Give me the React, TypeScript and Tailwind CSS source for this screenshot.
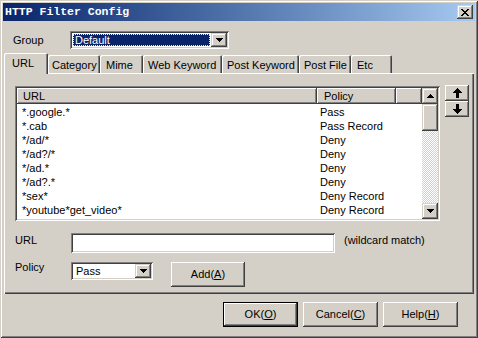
const sunken =
  "shadow-[inset_1px_1px_0_#808080,inset_-1px_-1px_0_#fff,inset_2px_2px_0_#404040,inset_-2px_-2px_0_#d4d0c8]";
const pushBtn =
  "shadow-[inset_-1px_-1px_0_#404040,inset_1px_1px_0_#fff,inset_-2px_-2px_0_#808080]";
const arrowBtn =
  "shadow-[inset_-1px_-1px_0_#404040,inset_1px_1px_0_#d4d0c8,inset_-2px_-2px_0_#808080,inset_2px_2px_0_#fff]";

const rows = [
  ["*.google.*", "Pass"],
  ["*.cab", "Pass Record"],
  ["*/ad/*", "Deny"],
  ["*/ad?/*", "Deny"],
  ["*/ad.*", "Deny"],
  ["*/ad?.*", "Deny"],
  ["*sex*", "Deny Record"],
  ["*youtube*get_video*", "Deny Record"],
];

const tabs = [
  { label: "Category", w: "w-[52px] pl-[4px]" },
  { label: "Mime", w: "w-[43px] pl-[6px]" },
  { label: "Web Keyword", w: "w-[79px] pl-[5px]" },
  { label: "Post Keyword", w: "w-[77px] pl-[5px]" },
  { label: "Post File", w: "w-[52px] pl-[5px]" },
  { label: "Etc", w: "w-[41px] pl-[6px]" },
];

function DownTri() {
  return (
    <svg width="7" height="4" viewBox="0 0 7 4" shapeRendering="crispEdges">
      <path d="M0 0h7v1H0zM1 1h5v1H1zM2 2h3v1H2zM3 3h1v1H3z" fill="#000" />
    </svg>
  );
}

function UpTri() {
  return (
    <svg width="7" height="4" viewBox="0 0 7 4" shapeRendering="crispEdges">
      <path d="M3 0h1v1H3zM2 1h3v1H2zM1 2h5v1H1zM0 3h7v1H0z" fill="#000" />
    </svg>
  );
}

function BigArrow({ down }: { down?: boolean }) {
  return (
    <svg
      width="9"
      height="10"
      viewBox="0 0 9 10"
      shapeRendering="crispEdges"
      className={down ? "rotate-180" : ""}
    >
      <path d="M4 0h1v1H4zM3 1h3v1H3zM2 2h5v1H2zM1 3h7v1H1zM0 4h9v1H0zM3 5h3v5H3z" fill="#000" />
    </svg>
  );
}

function CloseX() {
  return (
    <svg width="8" height="7" viewBox="0 0 8 7" shapeRendering="crispEdges">
      <path
        d="M0 0h2v1H0zM6 0h2v1H6zM1 1h2v1H1zM5 1h2v1H5zM2 2h4v1H2zM3 3h2v1H3zM2 4h4v1H2zM1 5h2v1H1zM5 5h2v1H5zM0 6h2v1H0zM6 6h2v1H6z"
        fill="#000"
      />
    </svg>
  );
}

function Combo({ width, text, selected }: { width: string; text: string; selected?: boolean }) {
  return (
    <div className={`${width} h-[18px] bg-white p-[2px] flex ${sunken}`}>
      <div className="flex-1 p-px">
        <div
          className={
            selected
              ? "h-full bg-[#0a246a] text-white border border-dotted border-[#f4f0c0] pl-px flex items-center"
              : "h-full pl-[2px] flex items-center"
          }
        >
          {text}
        </div>
      </div>
      <div className={`w-[16px] h-full bg-[#d4d0c8] flex items-center justify-center ${arrowBtn}`}>
        <DownTri />
      </div>
    </div>
  );
}

function Btn({ children, width, def }: { children: React.ReactNode; width: string; def?: boolean }) {
  return (
    <div
      className={`${width} h-[25px] bg-[#d4d0c8] flex items-center justify-center ${pushBtn} ${
        def ? "border border-black" : ""
      }`}
    >
      {children}
    </div>
  );
}

export default function App() {
  return (
    <div className="w-[478px] h-[338px] bg-[#d4d0c8] p-[3px] flex flex-col font-['Liberation_Sans',Arial,sans-serif] text-[11px] leading-[13px] text-black shadow-[inset_1px_1px_0_#d4d0c8,inset_-1px_-1px_0_#404040,inset_2px_2px_0_#fff,inset_-2px_-2px_0_#808080]">
      {/* title bar */}
      <div className="h-[18px] flex items-center bg-linear-to-r from-[#0a246a] to-[#a6caf0] pl-[2px] pr-[2px]">
        <span className="font-['Liberation_Mono',monospace] font-bold text-[11.5px] leading-none text-white">
          HTTP Filter Config
        </span>
        <div className={`ml-auto w-[16px] h-[14px] bg-[#d4d0c8] flex items-center justify-center ${arrowBtn}`}>
          <CloseX />
        </div>
      </div>

      {/* group */}
      <div className="mt-[10px] h-[18px] flex items-center">
        <span className="ml-[10px] w-[57px]">Group</span>
        <Combo width="w-[159px]" text="Default" selected />
      </div>

      {/* tabs */}
      <div className="mt-[4px] ml-[1px] h-[20px] flex items-end">
        <div className="relative z-10 -mb-px h-[21px] w-[44px] pt-[4px] pl-[8px] bg-[#d4d0c8] rounded-t-[2px] shadow-[inset_1px_1px_0_#fff,inset_-1px_0_0_#404040,inset_-2px_0_0_#808080]">
          URL
        </div>
        {tabs.map((t) => (
          <div
            key={t.label}
            className={`${t.w} h-[18px] pt-[4px] whitespace-nowrap rounded-t-[2px] shadow-[inset_1px_1px_0_#fff,inset_-1px_0_0_#404040,inset_-2px_0_0_#808080]`}
          >
            {t.label}
          </div>
        ))}
      </div>

      {/* panel */}
      <div className="ml-[1px] w-[470px] h-[221px] pt-[13px] pl-[11px] flex flex-col shadow-[inset_1px_1px_0_#fff,inset_-1px_-1px_0_#404040,inset_-2px_-2px_0_#808080]">
        <div className="flex items-start">
          {/* list view */}
          <div className={`w-[425px] h-[135px] bg-white p-[2px] flex ${sunken}`}>
            <div className="w-[405px] flex flex-col">
              <div className="h-[16px] flex bg-[#d4d0c8]">
                <div className={`w-[300px] h-full pl-[6px] flex items-center ${pushBtn}`}>URL</div>
                <div className={`w-[79px] h-full pl-[7px] flex items-center ${pushBtn}`}>Policy</div>
                <div className={`flex-1 h-full ${pushBtn}`} />
              </div>
              <div className="pt-px flex flex-col">
                {rows.map(([u, p]) => (
                  <div key={u} className="h-[14px] leading-[14px] flex">
                    <div className="w-[300px] pl-[5px]">{u}</div>
                    <div className="pl-[3px]">{p}</div>
                  </div>
                ))}
              </div>
            </div>
            <div className="w-[16px] flex flex-col">
              <div className={`h-[16px] bg-[#d4d0c8] flex items-center justify-center ${arrowBtn}`}>
                <UpTri />
              </div>
              <div className={`h-[27px] bg-[#d4d0c8] ${arrowBtn}`} />
              <div className="flex-1 bg-[repeating-conic-gradient(#fff_0_25%,#d4d0c8_0_50%)] bg-[length:2px_2px]" />
              <div className={`h-[16px] bg-[#d4d0c8] flex items-center justify-center ${arrowBtn}`}>
                <DownTri />
              </div>
            </div>
          </div>
          {/* move buttons */}
          <div className="ml-[5px] -mt-px flex flex-col">
            <div className={`w-[24px] h-[16px] flex items-center justify-center ${pushBtn}`}>
              <BigArrow />
            </div>
            <div className={`w-[24px] h-[16px] flex items-center justify-center ${pushBtn}`}>
              <BigArrow down />
            </div>
          </div>
        </div>

        <div className="mt-[12px] h-[20px] flex items-start">
          <span className="w-[56px] mt-px">URL</span>
          <div className={`w-[264px] h-[20px] bg-white ${sunken}`} />
          <span className="ml-[9px] mt-px">(wildcard match)</span>
        </div>

        <div className="mt-[8px] flex items-start">
          <span className="w-[56px]">Policy</span>
          <div className="mt-px">
            <Combo width="w-[82px]" text="Pass" />
          </div>
          <div className="ml-[18px] mt-px">
            <Btn width="w-[74px]">
              Add(<u>A</u>)
            </Btn>
          </div>
        </div>
      </div>

      {/* dialog buttons */}
      <div className="mt-[8px] pr-[17px] flex justify-end gap-[5px]">
        <Btn width="w-[75px]" def>
          OK(<u>O</u>)
        </Btn>
        <Btn width="w-[75px]">
          Cancel(<u>C</u>)
        </Btn>
        <Btn width="w-[75px]">
          Help(<u>H</u>)
        </Btn>
      </div>
    </div>
  );
}
